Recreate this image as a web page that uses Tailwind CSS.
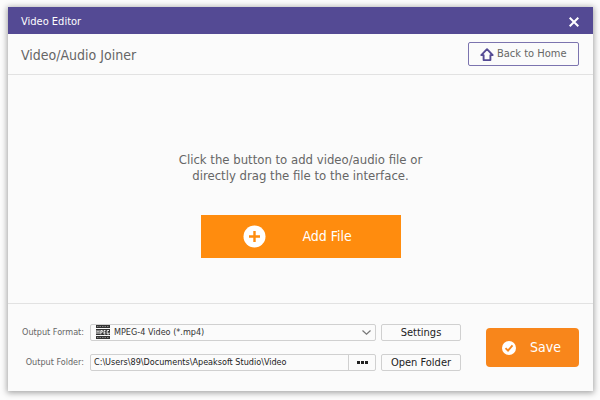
<!DOCTYPE html>
<html lang="en">
<head>
<meta charset="utf-8">
<title>Video Editor</title>
<script src="https://cdn.jsdelivr.net/npm/@tailwindcss/browser@4"></script>
</head>
<body class="bg-[#fcfcfc] font-['DejaVu_Sans_Condensed','DejaVu_Sans','Noto_Sans',sans-serif] text-[#666]">
<div class="flex min-h-screen pt-[7px] pr-[7px] pb-[9px] pl-2">
  <div class="flex flex-1 flex-col bg-[#fbfbfb] shadow-[0_1px_6px_1px_rgba(0,0,0,0.35)]">
    <header class="flex h-[27px] items-center justify-between bg-[#544a94] pt-[3px] pr-[14px] pl-[13px] text-white">
      <h1 class="text-[11px]">Video Editor</h1>
      <button type="button" aria-label="Close">
        <svg class="size-[10px]" viewBox="0 0 10 10" fill="none" stroke="currentColor" stroke-width="2"><path d="M.7.7l8.6 8.6M9.3.7L.7 9.3"/></svg>
      </button>
    </header>
    <div class="flex h-[41px] items-center justify-between border-b border-[#e2e2e2] pr-[14px] pl-[13px]">
      <h2 class="pt-[2px] text-[14px]">Video/Audio Joiner</h2>
      <button type="button" class="flex h-6 w-[111px] items-center gap-[3px] rounded-[2px] border border-[#7c74af] pt-px pl-[11px] text-[11px] whitespace-nowrap">
        <svg class="size-[14px] shrink-0" viewBox="0 0 14 14" fill="none" stroke="#544a94" stroke-width="1.9" stroke-linejoin="round"><path d="M7 1.2L1.3 7.1H3.6V12.1H10.4V7.1H12.7Z"/></svg>
        <span>Back to Home</span>
      </button>
    </div>
    <main class="flex flex-1 flex-col items-center justify-center gap-[31px] pt-8">
      <p class="text-center text-[13px] leading-4">Click the button to add video/audio file or<br>directly drag the file to the interface.</p>
      <button type="button" class="flex h-[43px] w-[200px] items-center gap-[37px] bg-[#ff8c0e] pl-[42px] text-[14px] text-white">
        <svg class="size-[23px]" viewBox="0 0 23 23"><circle cx="11.5" cy="11.5" r="11" fill="#fff"/><path d="M11.5 6v11M6 11.5h11" stroke="#ff8c0e" stroke-width="2.4"/></svg>
        <span>Add File</span>
      </button>
    </main>
    <footer class="flex items-center justify-between border-t border-[#e2e2e2] pt-5 pr-[14px] pb-5 pl-[13px]">
      <div class="grid grid-cols-[63px_287px_80px] gap-x-[5px] gap-y-[13px] text-[9px] leading-[15px]">
        <label for="format" class="self-center text-right whitespace-nowrap">Output Format:</label>
        <div class="relative ml-px h-[17px]">
          <select id="format" class="block size-full appearance-none rounded-[2px] border border-[#d0d0d0] pl-[23px] text-[#333]"><option>MPEG-4 Video (*.mp4)</option></select>
          <svg class="pointer-events-none absolute top-px left-[6px] h-[14px] w-[14px]" viewBox="0 0 14 14"><path fill="#333" d="M0 0h14v3H0zM0 4h14v6H0zM0 11h14v3H0z"/><path d="M1 1.500h12M1 12.500h12" stroke="#888" stroke-dasharray="1.500 1"/><path d="M1 9V5.500l1 1 1-1V9M4.800 9.300V5.500h1.500v1.700H4.800M9.500 5.500H8V9h1.500M8 7.300h1.400M13 5.500H11.200V9H13V7.500" fill="none" stroke="#fff" stroke-width=".9"/></svg>
          <svg class="pointer-events-none absolute top-[6px] right-[5px] h-[5px] w-[9px]" viewBox="0 0 9 5" fill="none" stroke="#777" stroke-width="1.200"><path d="M.5.5l4 3.700L8.500.5"/></svg>
        </div>
        <button type="button" class="rounded-[2px] border border-[#d0d0d0] text-[11px] leading-[15px] text-[#222]">Settings</button>
        <label for="folder" class="self-center text-right whitespace-nowrap">Output Folder:</label>
        <div class="ml-px flex h-[17px] rounded-[2px] border border-[#d0d0d0]">
          <input id="folder" type="text" value="C:\Users\89\Documents\Apeaksoft Studio\Video" class="min-w-0 flex-1 pl-[3px] text-[#222]">
          <button type="button" aria-label="Browse" class="flex w-[27px] items-center justify-center border-l border-[#d0d0d0]">
            <svg class="h-[3px] w-[11px]" viewBox="0 0 11 3" fill="#222"><path d="M0 0h3v3H0zM4 0h3v3H4zM8 0h3v3H8z"/></svg>
          </button>
        </div>
        <button type="button" class="rounded-[2px] border border-[#d0d0d0] text-[11px] leading-[15px] whitespace-nowrap text-[#222]">Open Folder</button>
      </div>
      <button type="button" class="flex h-[39px] w-[93px] items-center gap-[14px] rounded-[4px] bg-[#f8861b] pl-4 text-[14px] text-white">
        <svg class="size-[14px]" viewBox="0 0 14 14"><circle cx="7" cy="7" r="7" fill="#fff"/><path d="M3.500 7.200l2.500 2.500 4.500-5.400" fill="none" stroke="#f8861b" stroke-width="1.900"/></svg>
        <span>Save</span>
      </button>
    </footer>
  </div>
</div>
</body>
</html>
